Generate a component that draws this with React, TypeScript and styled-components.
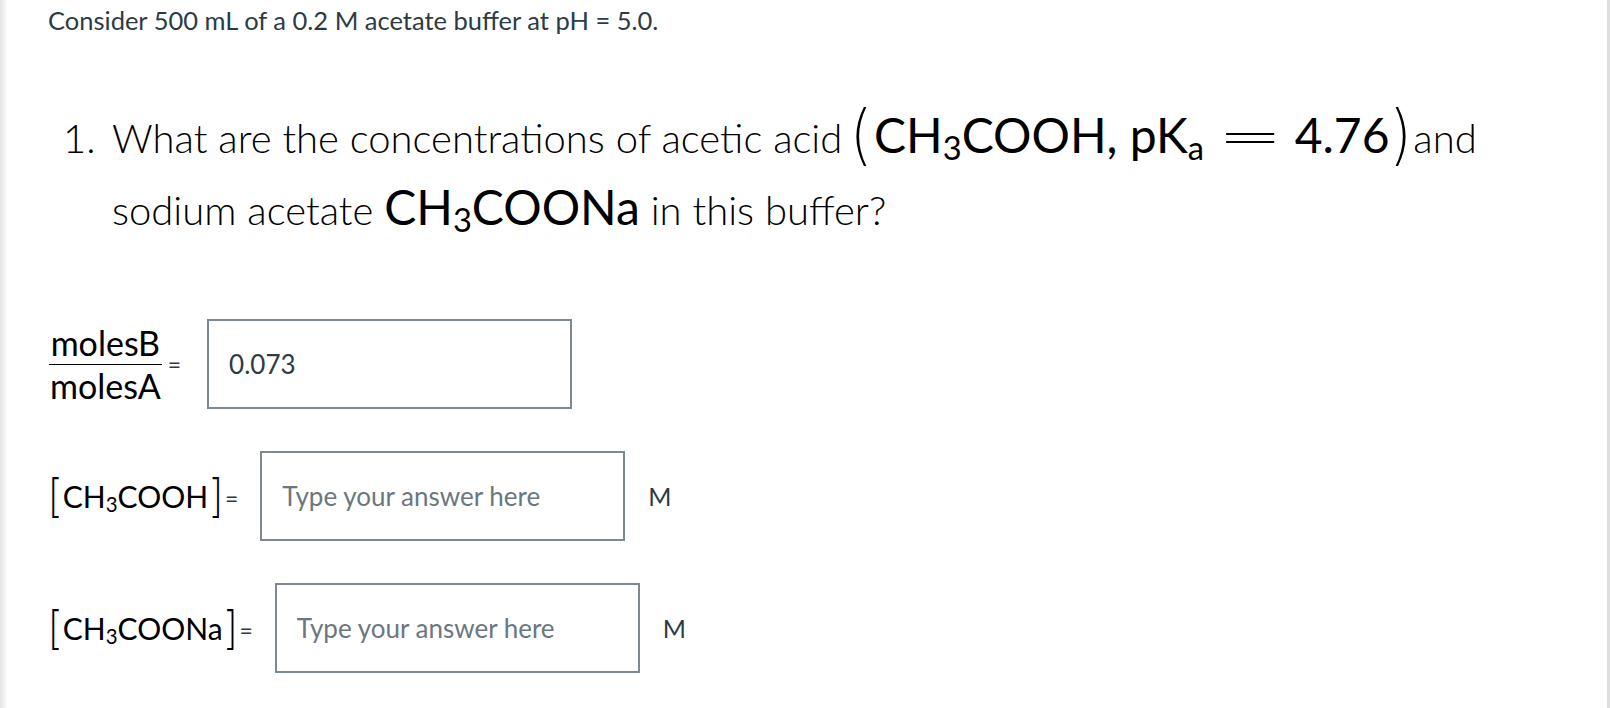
import styled, { createGlobalStyle } from "styled-components";

const GlobalStyle = createGlobalStyle`
  html, body {
    margin: 0;
    padding: 0;
    background: #ffffff;
  }
  body {
    font-family: Lato, "Noto Sans", sans-serif;
  }
`;

const Page = styled.div`
  display: flex;
  width: 100%;
  height: 708px;
  overflow: hidden;
`;

const Gutter = styled.div`
  width: 6px;
  flex-shrink: 0;
  background: linear-gradient(to right, #e4e4e4, #f6f6f6);
`;

const Edge = styled.div`
  width: 3px;
  flex-shrink: 0;
  background: #dedede;
`;

const Content = styled.div`
  flex: 1;
  padding-left: 42px;
`;

const Intro = styled.p`
  margin: 0;
  font-size: 25.5px;
  line-height: 40px;
  color: #2d3b45;
`;

const Question = styled.div`
  display: flex;
  margin-top: 62px;
  padding-left: 15px;
  font-size: 40px;
  font-weight: 300;
  line-height: 72px;
  color: #000;
`;

const Num = styled.span`
  width: 49px;
  flex-shrink: 0;
`;

const Body = styled.div`
  width: 1420px;
`;

const Chem = styled.span<{ size: number }>`
  font-size: ${(p) => p.size}px;
  font-weight: 400;
  line-height: 1;
  color: #000;
`;

const Sub = styled.sub`
  font-size: 0.68em;
  vertical-align: -0.22em;
  line-height: 0;
`;

const Paren = styled.span<{ side: "l" | "r" }>`
  display: inline-block;
  font-family: "DejaVu Sans", sans-serif;
  font-weight: 200;
  font-size: 56px;
  line-height: 0;
  transform: scaleY(1.18);
  vertical-align: -0.02em;
  margin: ${(p) => (p.side === "l" ? "0 2px 0 -3px" : "0 2px 0 0")};
`;

const Rel = styled.span`
  display: inline-block;
  font-family: "DejaVu Sans", sans-serif;
  font-weight: 200;
  transform: scaleX(1.6);
  margin: 0 0.5em 0 0.55em;
`;

const Answers = styled.div`
  display: flex;
  flex-direction: column;
  gap: 42px;
  margin-top: 73px;
`;

const Row = styled.div`
  display: flex;
  align-items: center;
  gap: 22px;
  height: 90px;
`;

const Label = styled.span`
  white-space: nowrap;
  font-size: 30px;
  line-height: 1;
  color: #000;
`;

const FracLabel = styled.span`
  display: flex;
  align-items: center;
  gap: 3px;
  margin-right: 4px;
`;

const Bracket = styled.span`
  display: inline-block;
  font-family: "DejaVu Sans", sans-serif;
  font-weight: 200;
  font-size: 38px;
  line-height: 0;
  transform: scaleY(1.2);
  vertical-align: -0.02em;
`;

const Equals = styled.span`
  font-size: 23px;
  color: #2d3b45;
  margin-left: 2px;
  vertical-align: 0.05em;
`;

const Fraction = styled.span`
  display: inline-flex;
  flex-direction: column;
  align-items: center;
  font-size: 34px;
  line-height: 36px;
  color: #000;
`;

const Numer = styled.span`
  padding: 0 2px 3px;
  border-bottom: 1px solid #000;
`;

const Denom = styled.span`
  padding: 3px 2px 0;
`;

const Field = styled.input`
  box-sizing: border-box;
  width: 365px;
  height: 90px;
  padding: 0 20px;
  border: 2px solid #7c8893;
  border-radius: 0;
  background: #fff;
  font-family: Lato, "Noto Sans", sans-serif;
  font-size: 26px;
  color: #2d3b45;
  outline: none;

  &::placeholder {
    color: #6b7780;
    opacity: 1;
  }
`;

const Unit = styled.span`
  font-size: 25px;
  color: #2d3b45;
  margin-left: 1px;
`;

export default function App() {
  return (
    <Page>
      <GlobalStyle />
      <Gutter />
      <Content>
        <Intro>Consider 500 mL of a 0.2 M acetate buffer at pH = 5.0.</Intro>
        <Question>
          <Num>1.</Num>
          <Body>
            What are the concentrations of acetic acid{" "}
            <Chem size={48}>
              <Paren side="l">(</Paren>CH<Sub>3</Sub>COOH, pK<Sub>a</Sub>
              <Rel>=</Rel>4.76<Paren side="r">)</Paren>
            </Chem>
            and sodium acetate{" "}
            <Chem size={48}>
              CH<Sub>3</Sub>COONa
            </Chem>{" "}
            in this buffer?
          </Body>
        </Question>
        <Answers>
          <Row>
            <FracLabel>
              <Fraction>
                <Numer>molesB</Numer>
                <Denom>molesA</Denom>
              </Fraction>
              <Equals>=</Equals>
            </FracLabel>
            <Field readOnly defaultValue="0.073" />
          </Row>
          <Row>
            <Label>
              <Bracket>[</Bracket>CH<Sub>3</Sub>COOH<Bracket>]</Bracket>
              <Equals>=</Equals>
            </Label>
            <Field placeholder="Type your answer here" />
            <Unit>M</Unit>
          </Row>
          <Row>
            <Label>
              <Bracket>[</Bracket>CH<Sub>3</Sub>COONa<Bracket>]</Bracket>
              <Equals>=</Equals>
            </Label>
            <Field placeholder="Type your answer here" />
            <Unit>M</Unit>
          </Row>
        </Answers>
      </Content>
      <Edge />
    </Page>
  );
}
